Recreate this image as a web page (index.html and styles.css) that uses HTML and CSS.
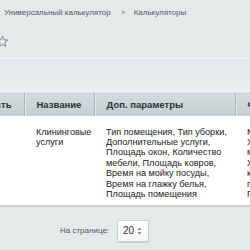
FILE: index.html
```html
<!DOCTYPE html>
<html lang="ru">
  <head>
    <meta charset="UTF-8" />
    <meta name="viewport" content="width=device-width, initial-scale=1.0" />
    <title>Калькуляторы</title>
    <link rel="stylesheet" href="styles.css">
  </head>
  <body>
    <div class="page">
      <div class="breadcrumbs">
        <span class="crumb">Универсальный калькулятор</span>
        <span class="sep">&#9656;</span>
        <span class="crumb">Калькуляторы</span>
      </div>

      <div class="title-row">
        <svg class="star" width="13" height="13" viewBox="0 0 24 24">
          <path d="M12 2.5l2.9 6.1 6.6.8-4.9 4.6 1.3 6.6L12 17.3l-5.9 3.3 1.3-6.6-4.9-4.6 6.6-.8z"
            fill="none" stroke="#8c979d" stroke-width="2" stroke-linejoin="round" />
        </svg>
      </div>

      <div class="toolbar"></div>

      <table class="grid">
        <colgroup>
          <col class="col-active">
          <col class="col-name">
          <col class="col-params">
          <col>
        </colgroup>
        <thead>
          <tr>
            <th class="th-active"><div class="th-right">Активность</div></th>
            <th>Название</th>
            <th>Доп. параметры</th>
            <th>Формула</th>
          </tr>
        </thead>
        <tbody>
          <tr>
            <td></td>
            <td>Клининговые<br>услуги</td>
            <td>
              Тип помещения, Тип уборки,<br>
              Дополнительные услуги,<br>
              Площадь окон, Количество<br>
              мебели, Площадь ковров,<br>
              Время на мойку посуды,<br>
              Время на глажку белья,<br>
              Площадь помещения
            </td>
            <td>
              Минимальная<br>
              Хозяйство<br>
              мебель<br>
              Химчистка<br>
              ковры<br>
              посуда<br>
              Площадь
            </td>
          </tr>
        </tbody>
      </table>

      <div class="pager">
        <span class="pager-label">На странице:</span>
        <div class="select">
          <span>20</span>
          <svg width="5" height="8" viewBox="0 0 5 8">
            <path d="M2.5 0.5L4.5 3H0.5z M2.5 7.5L4.5 5H0.5z" fill="#7a858b" />
          </svg>
        </div>
      </div>
    </div>
  </body>
</html>
```

FILE: styles.css
```css
body {
  margin: 0;
  padding: 0;
  font-family: "Liberation Sans", Arial, sans-serif;
  background-color: #e5e9ea;
  overflow: hidden;
}
.page {
  width: 250px;
  height: 250px;
  overflow: hidden;
}
.breadcrumbs {
  display: flex;
  align-items: center;
  height: 24px;
  padding-left: 4px;
  font-size: 8px;
  color: #525c67;
}
.sep {
  font-size: 7px;
  color: #9aa3a8;
  margin: 0 8px 0 11px;
}
.title-row {
  display: flex;
  align-items: center;
  height: 34px;
}
.star {
  margin-left: -4px;
  margin-top: 0;
}
.toolbar {
  height: 33px;
  border-top: 1px solid #f3f5f5;
  background: linear-gradient(#e1e6e8, #edf0f1);
}
.grid {
  border-collapse: collapse;
  margin-left: -40px;
  table-layout: fixed;
  width: 400px;
}
.col-active {
  width: 64px;
}
.col-name {
  width: 70px;
}
.col-params {
  width: 141px;
}
.grid th {
  height: 23px;
  padding: 0 12px;
  box-sizing: border-box;
  text-align: left;
  font-size: 9.5px;
  font-weight: bold;
  color: #27343b;
  background: linear-gradient(#d4dbde, #c4cdd1);
  border-top: 1px solid #dfe5e7;
  border-left: 1px solid #a8b3b8;
  box-shadow: inset 1px 0 0 #e2e7e9;
  white-space: nowrap;
}
.grid th.th-active {
  border-left: none;
  box-shadow: none;
}
.th-right {
  display: flex;
  justify-content: flex-end;
}
.grid td {
  vertical-align: top;
  background-color: #fff;
  padding: 11px 12px 6px 12px;
  font-size: 9.1px;
  line-height: 10.4px;
  color: #222;
  white-space: nowrap;
  overflow: hidden;
  height: 90px;
  box-sizing: border-box;
  border-bottom: 2px solid #c7ced1;
}
.pager {
  display: flex;
  align-items: center;
  height: 44px;
  padding-top: 3px;
  box-sizing: border-box;
  padding-left: 60px;
}
.pager-label {
  font-size: 8px;
  color: #4e5860;
  margin-right: 8px;
}
.select {
  display: flex;
  align-items: center;
  justify-content: space-between;
  width: 32px;
  height: 22px;
  box-sizing: border-box;
  padding: 0 6px 0 5px;
  background: linear-gradient(#ffffff, #f3f5f6);
  border: 1px solid #c9d0d4;
  border-radius: 2px;
  box-shadow: 0 1px 1px rgba(0, 0, 0, 0.12);
  font-size: 10px;
  color: #333;
}
```
